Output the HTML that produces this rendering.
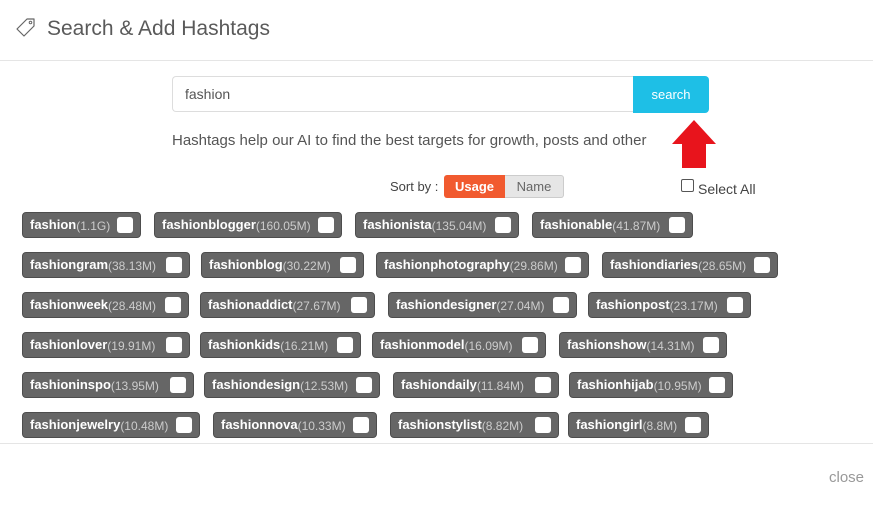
<!DOCTYPE html><html><head><style>
body{margin:0;width:873px;height:507px;background:#fff;font-family:"Liberation Sans",sans-serif;position:relative;overflow:hidden}
.t{position:absolute;height:24px;background:#666;border:1px solid #4d4d4d;border-radius:4px;color:#fff;font-weight:bold;font-size:13px;line-height:24px;padding-left:7px;box-sizing:content-box;white-space:nowrap}
.t small{font-weight:normal;color:#ccc;font-size:12px;position:relative;top:1px}
.t i{position:absolute;right:7px;top:4px;width:16px;height:16px;background:#fff;border-radius:3px}
</style></head><body>
<svg style="position:absolute;left:14px;top:16px" width="24" height="24" viewBox="0 0 24 24"><path d="M3 13 L13 3 H20 V10 L10 20 Z" fill="none" stroke="#666" stroke-width="1.2" stroke-linejoin="round"/><circle cx="16.5" cy="6.5" r="1.3" fill="none" stroke="#666"/></svg>
<div style="position:absolute;left:47px;top:17px;font-size:21px;color:#5a5a5a">Search &amp; Add Hashtags</div>
<div style="position:absolute;left:0;top:60px;width:873px;height:1px;background:#e5e5e5"></div>
<div style="position:absolute;left:172px;top:76px;width:461px;height:36px;border:1px solid #ddd;border-right:none;border-radius:4px 0 0 4px;box-sizing:border-box;font-size:14px;color:#555;line-height:34px;padding-left:12px">fashion</div>
<div style="position:absolute;left:633px;top:76px;width:76px;height:37px;background:#1ebfe6;border-radius:0 4px 4px 0;color:#fff;font-size:13px;line-height:37px;text-align:center">search</div>
<div style="position:absolute;left:172px;top:132px;font-size:15px;color:#555">Hashtags help our AI to find the best targets for growth, posts and other</div>
<svg style="position:absolute;left:670px;top:118px" width="48" height="52"><path d="M24 2 L46 26 H36 V50 H12 V26 H2 Z" fill="#e8141c"/></svg>
<div style="position:absolute;left:390px;top:179px;font-size:13px;color:#444">Sort by :</div>
<div style="position:absolute;left:444px;top:175px;width:61px;height:23px;background:#f15a2f;border-radius:3px 0 0 3px;color:#fff;font-weight:bold;font-size:13px;line-height:23px;text-align:center">Usage</div>
<div style="position:absolute;left:505px;top:175px;width:59px;height:23px;background:#e6e6e6;border:1px solid #ccc;border-left:none;box-sizing:border-box;border-radius:0 3px 3px 0;color:#666;font-size:13px;line-height:21px;text-align:center">Name</div>
<div style="position:absolute;left:681px;top:179px;width:13px;height:13px;border:1px solid #555;border-radius:2px;box-sizing:border-box"></div>
<div style="position:absolute;left:698px;top:181px;font-size:14px;color:#444">Select All</div>

<div class="t" style="left:22px;top:212px;width:110px">fashion<small>(1.1G)</small><i></i></div>
<div class="t" style="left:154px;top:212px;width:179px">fashionblogger<small>(160.05M)</small><i></i></div>
<div class="t" style="left:355px;top:212px;width:155px">fashionista<small>(135.04M)</small><i></i></div>
<div class="t" style="left:532px;top:212px;width:152px">fashionable<small>(41.87M)</small><i></i></div>

<div class="t" style="left:22px;top:252px;width:159px">fashiongram<small>(38.13M)</small><i></i></div>
<div class="t" style="left:201px;top:252px;width:154px">fashionblog<small>(30.22M)</small><i></i></div>
<div class="t" style="left:376px;top:252px;width:204px">fashionphotography<small>(29.86M)</small><i></i></div>
<div class="t" style="left:602px;top:252px;width:167px">fashiondiaries<small>(28.65M)</small><i></i></div>

<div class="t" style="left:22px;top:292px;width:158px">fashionweek<small>(28.48M)</small><i></i></div>
<div class="t" style="left:200px;top:292px;width:166px">fashionaddict<small>(27.67M)</small><i></i></div>
<div class="t" style="left:388px;top:292px;width:180px">fashiondesigner<small>(27.04M)</small><i></i></div>
<div class="t" style="left:588px;top:292px;width:154px">fashionpost<small>(23.17M)</small><i></i></div>

<div class="t" style="left:22px;top:332px;width:159px">fashionlover<small>(19.91M)</small><i></i></div>
<div class="t" style="left:200px;top:332px;width:152px">fashionkids<small>(16.21M)</small><i></i></div>
<div class="t" style="left:372px;top:332px;width:165px">fashionmodel<small>(16.09M)</small><i></i></div>
<div class="t" style="left:559px;top:332px;width:159px">fashionshow<small>(14.31M)</small><i></i></div>

<div class="t" style="left:22px;top:372px;width:163px">fashioninspo<small>(13.95M)</small><i></i></div>
<div class="t" style="left:204px;top:372px;width:167px">fashiondesign<small>(12.53M)</small><i></i></div>
<div class="t" style="left:393px;top:372px;width:157px">fashiondaily<small>(11.84M)</small><i></i></div>
<div class="t" style="left:569px;top:372px;width:155px">fashionhijab<small>(10.95M)</small><i></i></div>

<div class="t" style="left:22px;top:412px;width:169px">fashionjewelry<small>(10.48M)</small><i></i></div>
<div class="t" style="left:213px;top:412px;width:155px">fashionnova<small>(10.33M)</small><i></i></div>
<div class="t" style="left:390px;top:412px;width:160px">fashionstylist<small>(8.82M)</small><i></i></div>
<div class="t" style="left:568px;top:412px;width:132px">fashiongirl<small>(8.8M)</small><i></i></div>

<div style="position:absolute;left:0;top:443px;width:873px;height:1px;background:#e5e5e5"></div>
<div style="position:absolute;left:829px;top:469px;font-size:15px;color:#999">close</div>
</body></html>
